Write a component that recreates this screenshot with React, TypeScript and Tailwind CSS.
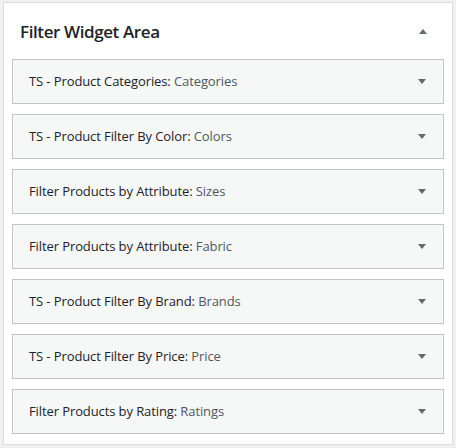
const widgets = [
  { name: 'TS - Product Categories', title: 'Categories' },
  { name: 'TS - Product Filter By Color', title: 'Colors' },
  { name: 'Filter Products by Attribute', title: 'Sizes' },
  { name: 'Filter Products by Attribute', title: 'Fabric' },
  { name: 'TS - Product Filter By Brand', title: 'Brands' },
  { name: 'TS - Product Filter By Price', title: 'Price' },
  { name: 'Filter Products by Rating', title: 'Ratings' },
];

function Arrow({ up }: { up?: boolean }) {
  return (
    <svg width="10" height="6" viewBox="0 0 10 6" className="shrink-0">
      <path d={up ? 'M1 6 L5 1 L9 6 Z' : 'M1 0 L9 0 L5 5 Z'} fill="#646970" />
    </svg>
  );
}

export default function App() {
  return (
    <div
      className="w-[456px] h-[448px] bg-[#f0f0f1] pt-[2px] pl-[3px]"
      style={{ fontFamily: '"Open Sans", "Noto Sans", sans-serif' }}
    >
      <div className="w-[450px] h-[443px] bg-white border border-[#dcdcde]">
        <div className="h-[56px] flex items-center justify-between pl-[16px] pr-[24px]">
          <h2 className="text-[17px] font-semibold text-[#1d2327] leading-none tracking-[-0.4px]">
            Filter Widget Area
          </h2>
          <Arrow up />
        </div>
        <div className="flex flex-col gap-[10px] px-[8px]">
          {widgets.map((w, i) => (
            <div
              key={i}
              className="h-[45px] flex items-center justify-between bg-[#f6f7f7] border border-[#c3c4c7] pl-[16px] pr-[16px]"
            >
              <span className="text-[13px] text-[#1d2327] tracking-[-0.1px]">
                {w.name}: <span className="text-[#50575e]">{w.title}</span>
              </span>
              <Arrow />
            </div>
          ))}
        </div>
      </div>
    </div>
  );
}
